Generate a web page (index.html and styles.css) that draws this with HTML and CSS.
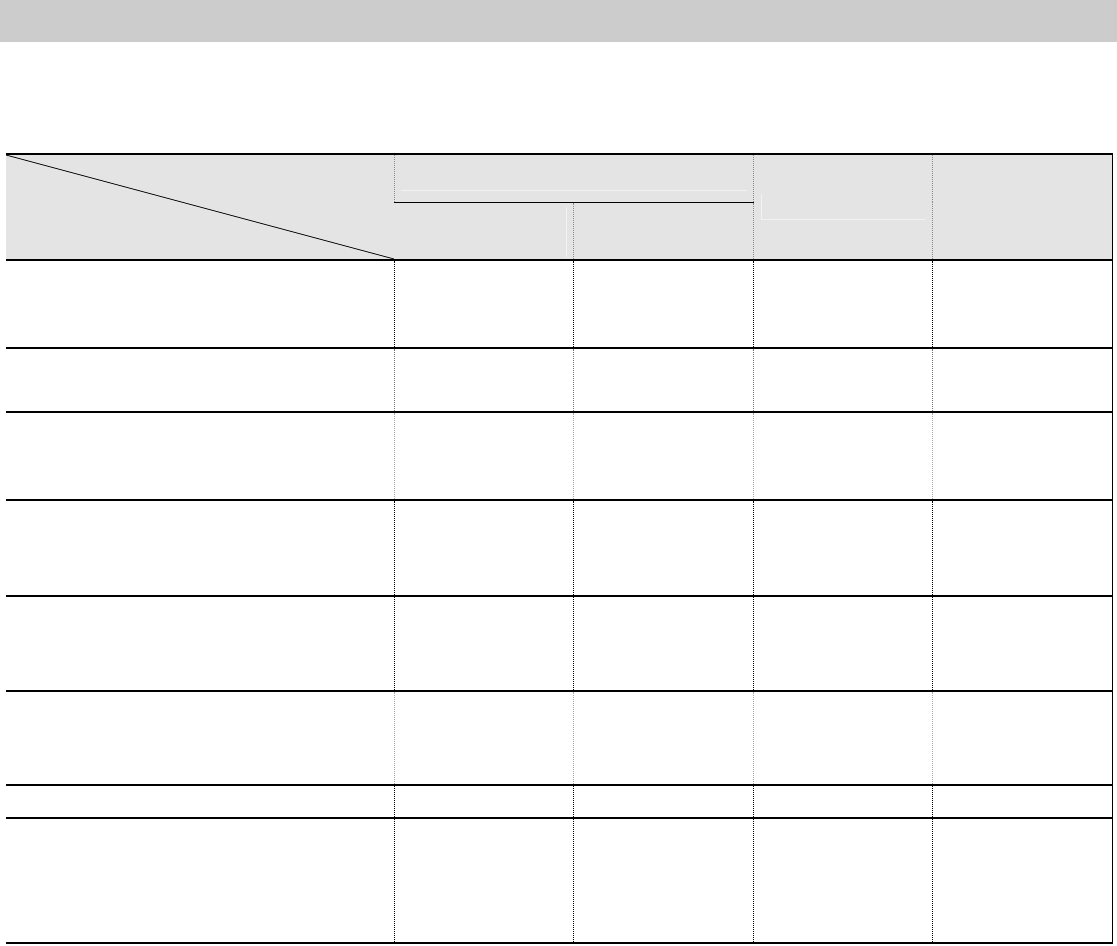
FILE: index.html
```html
<!DOCTYPE html>
<html lang="en">
<head>
<meta charset="utf-8">
<title>Table</title>
<link rel="stylesheet" href="styles.css">
</head>
<body>
<div class="band"></div>
<div class="page">
  <table class="grid">
    <colgroup>
      <col class="c0"><col class="c1"><col class="c2"><col class="c3"><col class="c4">
    </colgroup>
    <thead>
      <tr class="h1">
        <th rowspan="2" class="diag"></th>
        <th colspan="2" class="group"><div class="group-inner"></div></th>
        <th rowspan="2" class="single"><div class="single-inner"></div></th>
        <th rowspan="2" class="last"></th>
      </tr>
      <tr class="h2">
        <th class="sub"><div class="sub-inner"></div></th>
        <th class="sub"></th>
      </tr>
    </thead>
    <tbody>
      <tr class="r1 dark"><td></td><td></td><td></td><td></td><td></td></tr>
      <tr class="r2 mid"><td></td><td></td><td></td><td></td><td></td></tr>
      <tr class="r3 light"><td></td><td></td><td></td><td></td><td></td></tr>
      <tr class="r4 dark"><td></td><td></td><td></td><td></td><td></td></tr>
      <tr class="r5 dark"><td></td><td></td><td></td><td></td><td></td></tr>
      <tr class="r6 light"><td></td><td></td><td></td><td></td><td></td></tr>
      <tr class="r7 dark"><td></td><td></td><td></td><td></td><td></td></tr>
      <tr class="r8 dark"><td></td><td></td><td></td><td></td><td></td></tr>
    </tbody>
  </table>
</div>
</body>
</html>
```
FILE: styles.css
```css
html, body {
  margin: 0;
  padding: 0;
  background: #ffffff;
  font-family: "Liberation Sans", Arial, sans-serif;
}

.band {
  height: 42px;
  background: #cccccc;
}

.page {
  padding: 111px 5px 0 6px;
}

.grid {
  width: 1106px;
  border-collapse: collapse;
  table-layout: fixed;
  border-top: 2px solid #000;
  border-right: 1px solid #000;
  border-bottom: 2px solid #000;
}

.c0 { width: 388px; }
.c1 { width: 179px; }
.c2 { width: 180px; }
.c3 { width: 179px; }
.c4 { width: 180px; }

.grid th,
.grid td {
  padding: 0;
  vertical-align: top;
  border-left: 1px dotted #000;
}

.grid th:first-child,
.grid td:first-child {
  border-left: none;
}

.grid th {
  background: #e4e4e4;
  border-left-color: #8a8a8a;
}

.h1 { height: 48px; }
.h2 { height: 58px; }

.grid th.group {
  border-bottom: 1px solid #000;
}

.group-inner {
  height: 35px;
  margin: 0 6px 0 6px;
  border-bottom: 1px solid #f2f2f2;
}

.single-inner {
  height: 25px;
  margin: 39px 7px 0 7px;
  border-left: 1px solid #f2f2f2;
  border-bottom: 1px solid #f2f2f2;
}

.sub-inner {
  height: 50px;
  margin: 4px 6px 0 0;
  border-right: 1px solid #f2f2f2;
}

.grid th.diag {
  background:
    linear-gradient(to top right,
      rgba(0,0,0,0) calc(50% - 0.9px),
      #000 50%,
      rgba(0,0,0,0) calc(50% + 0.9px)),
    #e4e4e4;
}

.grid tbody tr {
  border-top: 2px solid #000;
}

.r1 { height: 88px; }
.r2 { height: 64px; }
.r3 { height: 88px; }
.r4 { height: 96px; }
.r5 { height: 95px; }
.r6 { height: 94px; }
.r7 { height: 33px; }
.r8 { height: 125px; }

.dark td { border-left-color: #000; }
.mid td { border-left-color: #777; }
.light td { border-left-color: #a8a8a8; }
```
